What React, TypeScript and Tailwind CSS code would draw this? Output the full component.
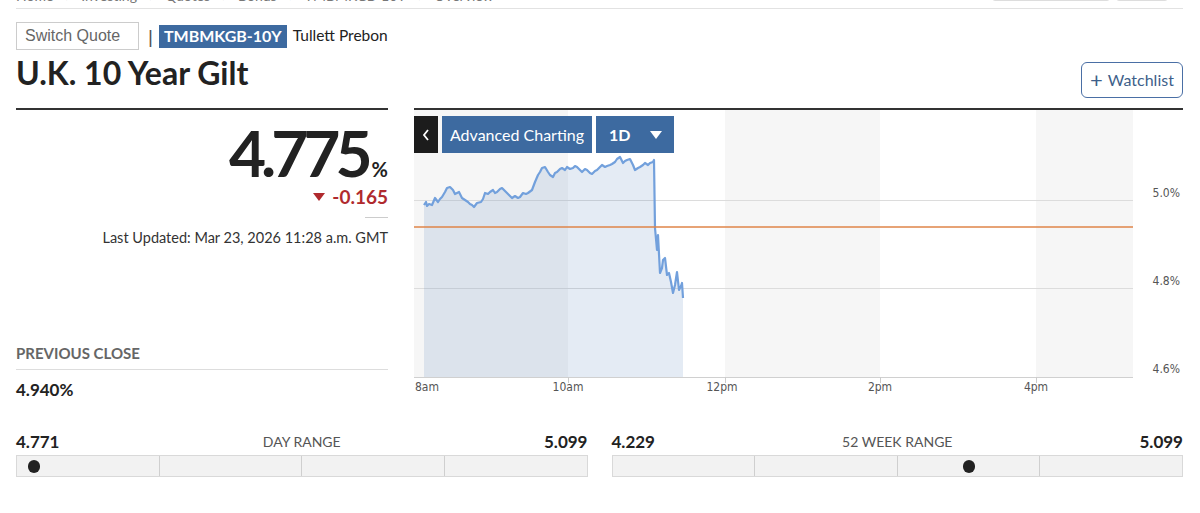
import React from "react";

const pts: [number, number][] = [
  [10, 95], [12, 92], [13, 96], [15, 94], [18, 95], [21, 88], [24, 92], [26, 89], [28, 87], [31, 82], [33, 78],
  [36, 77], [39, 80], [41, 84], [43, 83], [45, 82], [48, 88], [51, 90], [54, 92], [56, 94], [58, 95], [60, 97],
  [63, 93], [67, 92], [69, 89], [71, 83], [74, 84], [76, 82], [79, 80], [81, 83], [83, 82], [86, 79], [88, 78],
  [91, 81], [93, 83], [96, 86], [98, 88], [101, 86], [104, 88], [106, 87], [109, 83], [112, 84], [114, 83],
  [118, 80], [121, 72], [124, 65], [126, 62], [128, 58], [131, 57], [134, 62], [136, 65], [139, 67], [141, 63],
  [143, 62], [146, 59], [148, 58], [151, 60], [153, 57], [156, 59], [159, 58], [161, 56], [163, 57], [166, 60],
  [168, 62], [171, 59], [173, 60], [176, 63], [178, 64], [181, 61], [183, 60], [186, 57], [188, 55], [191, 57],
  [193, 56], [196, 55], [198, 54], [201, 52], [203, 49], [206, 47], [209, 53], [211, 51], [213, 50], [216, 49],
  [219, 55], [221, 60], [224, 58], [226, 57], [229, 55], [231, 53], [234, 55], [236, 53], [239, 52], [240, 50],
  [241, 118], [243, 140], [244, 125], [246, 163], [248, 158], [249, 150], [251, 148], [253, 165], [255, 163],
  [257, 172], [259, 183], [261, 175], [263, 162], [265, 180], [267, 176], [268, 173], [269, 188],
];

function RangeBar({ low, high, value, label }: { low: string; high: string; value: number; label: string }) {
  return (
    <div className="flex-1">
      <div className="flex items-center justify-between h-[20px] leading-[20px]">
        <span className="text-[17px] font-bold text-[#222]">{low}</span>
        <span className="text-[14px] text-[#555] uppercase">{label}</span>
        <span className="text-[17px] font-bold text-[#222]">{high}</span>
      </div>
      <div className="relative mt-[3px] h-[22px] border border-[#d9d9d9] bg-[#f2f2f2] flex">
        <div className="flex-1 border-r border-[#cfcfcf]" />
        <div className="flex-1 border-r border-[#cfcfcf]" />
        <div className="flex-1 border-r border-[#cfcfcf]" />
        <div className="flex-1" />
        <div
          className="absolute top-[4px] w-[12px] h-[13px] rounded-full bg-[#222] -translate-x-1/2"
          style={{ left: `${value}%` }}
        />
      </div>
    </div>
  );
}

export default function App() {
  const line = pts.map((p, i) => `${i ? "L" : "M"}${p[0]},${p[1]}`).join(" ");
  const area = `${line} L269,267 L10,267 Z`;
  const axisFont = "'DejaVu Sans Condensed', 'Liberation Sans Narrow', 'Liberation Sans', sans-serif";
  return (
    <div className="w-[1200px] h-[513px] overflow-hidden bg-white [font-family:Lato,'Noto_Sans',sans-serif] text-[#222]">
      <div className="pl-4 pr-[17px]">
        {/* breadcrumb */}
        <div className="-mt-[13px] h-[22px] border-b border-[#e2e2e2] flex justify-between items-start">
          <div className="flex items-center gap-[12px] text-[14px] leading-[18px] text-[#777]">
            <span>Home</span><span>›</span><span>Investing</span><span>›</span><span>Quotes</span><span>›</span>
            <span>Bonds</span><span>›</span><span>TMBMKGB-10Y</span><span>›</span><span>Overview</span>
          </div>
          <div className="flex gap-[6px] mr-[15px]">
            <div className="w-[118px] h-[14px] border border-[#ddd] rounded-[3px]" />
            <div className="w-[52px] h-[14px] border border-[#ddd] rounded-[3px]" />
          </div>
        </div>

        {/* switch row */}
        <div className="flex items-center mt-[13px] h-[28px]">
          <div className="w-[123px] h-[28px] border border-[#ccc] flex items-center pl-[8px] text-[16px] text-[#666] [font-family:'Liberation_Sans',Arial,sans-serif]">
            Switch Quote
          </div>
          <span className="ml-[9px] text-[#555] text-[19px] leading-none [font-family:'Liberation_Sans',Arial,sans-serif]">|</span>
          <span className="ml-[6px] h-[23px] px-[5px] bg-[#3d6aa0] text-white font-bold text-[16px] flex items-center">
            TMBMKGB-10Y
          </span>
          <span className="ml-[6px] text-[15.5px] text-[#222]">Tullett Prebon</span>
        </div>

        {/* title row */}
        <div className="flex justify-between items-start">
          <h1 className="mt-[5px] text-[32px] leading-[36px] font-bold text-[#222]">U.K. 10 Year Gilt</h1>
          <button className="mt-[12px] h-[36px] w-[102px] border border-[#4a6fa5] rounded-[6px] text-[16px] text-[#3e5f8a] flex items-center justify-center gap-[5px]">
            <span className="text-[22px] leading-none">+</span>
            <span>Watchlist</span>
          </button>
        </div>

        {/* main row */}
        <div className="mt-[10px] flex gap-[26px]">
          <div className="w-[372px] border-t-2 border-[#333] flex flex-col">
            <div className="mt-[11px] flex justify-end items-baseline">
              <span className="text-[64px] leading-[64px] font-bold tracking-[-5px] text-[#222]">4.775</span>
              <span className="ml-[4px] text-[20px] font-bold text-[#222]">%</span>
            </div>
            <div className="flex justify-end items-center h-[24px] text-[19px] leading-[24px] font-bold text-[#b02a2e]">
              <svg width="12" height="9" viewBox="0 0 12 9" className="mr-[7px]">
                <path d="M0 0 L12 0 L6 8 Z" fill="#b02a2e" />
              </svg>
              <span>-0.165</span>
            </div>
            <div className="self-end mt-[8px] h-px w-[23px] bg-[#ccc]" />
            <div className="mt-[10px] text-right text-[14.5px] leading-[20px] text-[#333]">
              Last Updated: Mar 23, 2026 11:28 a.m. GMT
            </div>
            <div className="mt-[95px] pb-[6px] border-b border-[#ddd] text-[15px] leading-[20px] font-bold text-[#666] uppercase">
              Previous Close
            </div>
            <div className="mt-[9px] text-[17px] leading-[22px] font-bold text-[#222]">4.940%</div>
          </div>

          <div className="w-[769px] border-t-2 border-[#333] relative">
            <svg width="769" height="290" viewBox="0 0 769 290" className="block">
              <rect x="0" y="0" width="154" height="267" fill="#f6f6f6" />
              <rect x="311" y="0" width="155" height="267" fill="#f6f6f6" />
              <rect x="622" y="0" width="97" height="267" fill="#f6f6f6" />
              <line x1="0" y1="90.5" x2="719" y2="90.5" stroke="#dcdcdc" strokeWidth="1" />
              <line x1="0" y1="178.5" x2="719" y2="178.5" stroke="#dcdcdc" strokeWidth="1" />
              <path d={area} fill="#4a78b5" fillOpacity="0.15" />
              <path d={line} fill="none" stroke="#72a0dc" strokeWidth="2.2" strokeLinejoin="round" />
              <line x1="0" y1="117" x2="719" y2="117" stroke="#df8548" strokeWidth="1.5" />
              <line x1="0" y1="267.5" x2="719" y2="267.5" stroke="#d0d0d0" strokeWidth="1" />
              {[154, 311, 466, 622].map((x) => (
                <line key={x} x1={x + 0.5} y1="267" x2={x + 0.5} y2="273" stroke="#ccc" strokeWidth="1" />
              ))}
              <g fontFamily={axisFont} fontSize="12" fill="#555">
                <text x="766" y="87" textAnchor="end">5.0%</text>
                <text x="766" y="175" textAnchor="end">4.8%</text>
                <text x="766" y="263" textAnchor="end">4.6%</text>
                <text x="1" y="281">8am</text>
                <text x="154" y="281" textAnchor="middle">10am</text>
                <text x="308" y="281" textAnchor="middle">12pm</text>
                <text x="466" y="281" textAnchor="middle">2pm</text>
                <text x="622" y="281" textAnchor="middle">4pm</text>
              </g>
            </svg>
            <div className="absolute top-[6px] left-0 flex gap-[4px] h-[37px]">
              <div className="w-[24px] bg-[#1c1c1c] text-white flex items-center justify-center">
                <svg width="8" height="12" viewBox="0 0 8 12">
                  <path d="M6 1 L2 6 L6 11" fill="none" stroke="white" strokeWidth="1.8" />
                </svg>
              </div>
              <div className="w-[150px] bg-[#3d6aa0] text-white text-[16px] flex items-center justify-center">
                Advanced Charting
              </div>
              <div className="w-[78px] bg-[#3d6aa0] text-white text-[16px] font-bold flex items-center justify-between pl-[13px] pr-[12px]">
                <span>1D</span>
                <svg width="12" height="8" viewBox="0 0 12 8">
                  <path d="M0 0 L12 0 L6 8 Z" fill="white" />
                </svg>
              </div>
            </div>
          </div>
        </div>

        {/* ranges */}
        <div className="mt-[31px] flex gap-[24px]">
          <RangeBar low="4.771" high="5.099" value={3} label="Day Range" />
          <RangeBar low="4.229" high="5.099" value={62.6} label="52 Week Range" />
        </div>
      </div>
    </div>
  );
}
